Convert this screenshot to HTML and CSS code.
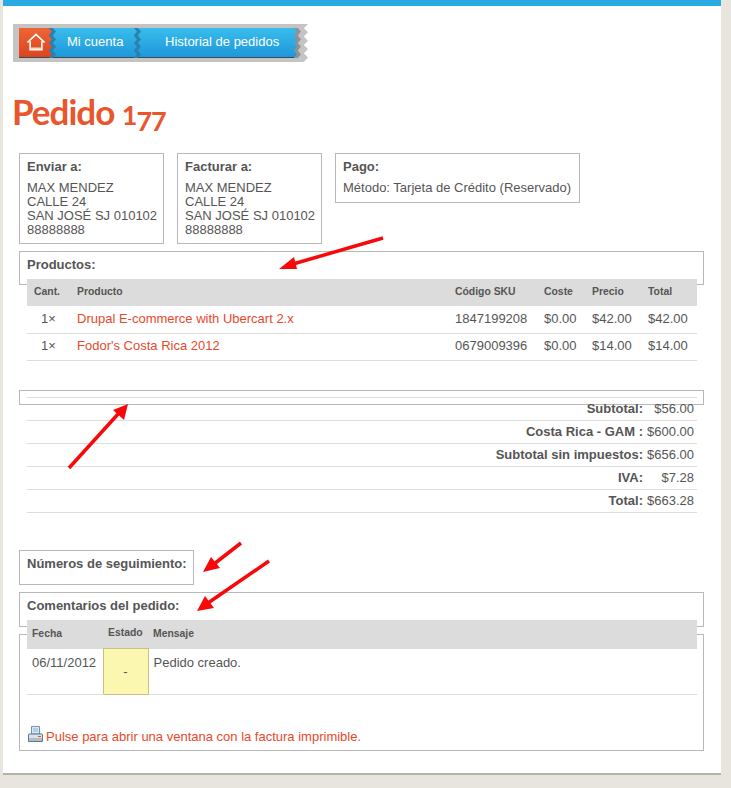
FILE: index.html
```html
<!DOCTYPE html>
<html lang="es">
<head>
  <meta charset="UTF-8">
  <title>Pedido 177</title>
  <link rel="stylesheet" href="styles.css">
</head>
<body>
  <div class="page">
    <div class="crumbs">
      <a class="crumb home" href="#">
        <svg width="20" height="19" viewBox="0 0 22 21">
          <path d="M1.5 10.5 L11 1.5 L20.5 10.5 M4.5 9 V18.5 H17.5 V9" fill="none" stroke="#fff" stroke-width="1.8"/>
          <rect x="5.5" y="16" width="11" height="2" fill="#f6d9b8"/>
        </svg>
      </a>
      <a class="crumb first" href="#"><span class="zig"></span>Mi cuenta</a>
      <a class="crumb second" href="#"><span class="zig"></span>Historial de pedidos<span class="zig tail"></span></a>
    </div>

    <h1>Pedido <span class="num">1</span><span class="num low">77</span></h1>

    <div class="info">
      <div class="box address">
        <h3>Enviar a:</h3>
        <p>MAX MENDEZ<br>CALLE 24<br>SAN JOSÉ SJ 010102<br>88888888</p>
      </div>
      <div class="box address">
        <h3>Facturar a:</h3>
        <p>MAX MENDEZ<br>CALLE 24<br>SAN JOSÉ SJ 010102<br>88888888</p>
      </div>
      <div class="box payment">
        <h3>Pago:</h3>
        <p>Método: Tarjeta de Crédito (Reservado)</p>
      </div>
    </div>

    <div class="box wide products-box"><h3>Productos:</h3></div>
    <table class="data products">
      <thead>
        <tr>
          <th class="c-qty">Cant.</th>
          <th class="c-name">Producto</th>
          <th class="c-sku">Código SKU</th>
          <th class="c-cost">Coste</th>
          <th class="c-price">Precio</th>
          <th class="c-total">Total</th>
        </tr>
      </thead>
      <tbody>
        <tr>
          <td class="qty">1×</td>
          <td><a href="#">Drupal E-commerce with Ubercart 2.x</a></td>
          <td>1847199208</td>
          <td>$0.00</td>
          <td>$42.00</td>
          <td>$42.00</td>
        </tr>
        <tr>
          <td class="qty">1×</td>
          <td><a href="#">Fodor's Costa Rica 2012</a></td>
          <td>0679009396</td>
          <td>$0.00</td>
          <td>$14.00</td>
          <td>$14.00</td>
        </tr>
      </tbody>
    </table>

    <div class="box wide empty-box"></div>
    <table class="totals">
      <tr><th>Subtotal:</th><td>$56.00</td></tr>
      <tr><th>Costa Rica - GAM :</th><td>$600.00</td></tr>
      <tr><th>Subtotal sin impuestos:</th><td>$656.00</td></tr>
      <tr><th>IVA:</th><td>$7.28</td></tr>
      <tr><th>Total:</th><td>$663.28</td></tr>
    </table>

    <div class="box tracking"><h3>Números de seguimiento:</h3></div>
    <div class="box wide comments-box"><h3>Comentarios del pedido:</h3></div>

    <div class="box wide history">
      <table class="data log">
        <thead>
          <tr>
            <th class="c-date">Fecha</th>
            <th class="c-state">Estado</th>
            <th>Mensaje</th>
          </tr>
        </thead>
        <tbody>
          <tr>
            <td>06/11/2012</td>
            <td class="state">-</td>
            <td>Pedido creado.</td>
          </tr>
        </tbody>
      </table>
      <a class="print" href="#">
        <svg width="15" height="17" viewBox="0 0 15 17">
          <path d="M3.5 .5 H11.5 V8 H3.5 Z" fill="#d6eaf7" stroke="#6f93b0"/>
          <path d="M5 3 H10 M5 5 H10" stroke="#8fb2cc"/>
          <path d="M1 8 H14 Q14.5 8 14.5 9 V15.5 H.5 V9 Q.5 8 1 8 Z" fill="#dde1e5" stroke="#5a7a96"/>
          <rect x="1" y="12" width="13" height="3" fill="#b4bcc4"/>
          <rect x="10" y="10" width="3" height="1" fill="#d9503a"/>
        </svg>
        <span>Pulse para abrir una ventana con la factura imprimible.</span>
      </a>
    </div>

    <!-- red marks drawn on top of the screenshot -->
    <svg class="arrows" width="718" height="767" viewBox="3 0 718 767">
      <g fill="none" stroke="#f80808" stroke-width="3.5">
        <path d="M383 238 L293 264"/>
        <path d="M69 468 L119 413"/>
        <path d="M241 543 L214 564"/>
        <path d="M269 561 L208 603"/>
      </g>
      <g fill="#f80808">
        <path d="M279 269 L294 257 L297 269 Z"/>
        <path d="M128 404 L124 420 L113 410 Z"/>
        <path d="M203 572 L211 557 L220 568 Z"/>
        <path d="M197 611 L205 596 L214 608 Z"/>
      </g>
    </svg>
  </div>
</body>
</html>
```
FILE: styles.css
```css
body {
  margin: 0;
  background: #e8e4de;
  font-family: "Liberation Sans", Arial, sans-serif;
  font-size: 13px;
  color: #555;
}

a {
  color: #e8492a;
  text-decoration: none;
}

.page {
  position: relative;
  box-sizing: border-box;
  width: 718px;
  height: 775px;
  margin-left: 3px;
  padding: 18px 0 0 16px;
  background: #fff;
  border-top: 6px solid #29abe2;
  border-bottom: 2px solid #b5b2aa;
}

/* breadcrumb */
.crumbs {
  display: flex;
  box-sizing: border-box;
  width: 295px;
  height: 38px;
  margin-left: -6px;
  padding: 4px 0 4px 6px;
  background: #c4c4c4;
  clip-path: polygon(0 0, 100% 0, 98.6% 11%, 100% 22%, 98.6% 33%, 100% 44%, 98.6% 55%, 100% 66%, 98.6% 77%, 100% 88%, 98.6% 100%, 0 100%);
}

.crumb {
  position: relative;
  display: flex;
  align-items: center;
  box-sizing: border-box;
  height: 30px;
  padding-bottom: 2px;
  color: #fff;
  background: linear-gradient(#39bdec, #1e97db);
  border-bottom: 1px solid #3b4a55;
}

.home {
  justify-content: center;
  width: 33px;
  padding-bottom: 0;
  background: linear-gradient(#ee6534, #dc4420);
}

.first {
  width: 85px;
  padding-left: 15px;
}

.second {
  width: 160px;
  padding-left: 28px;
}

.zig {
  position: absolute;
  top: 0;
  bottom: -1px;
  left: -4px;
  width: 8px;
  background: #2b80ae;
  clip-path: polygon(60% 0, 100% 12%, 60% 25%, 100% 38%, 60% 50%, 100% 62%, 60% 75%, 100% 88%, 60% 100%, 10% 100%, 50% 88%, 10% 75%, 50% 62%, 10% 50%, 50% 38%, 10% 25%, 50% 12%, 10% 0);
}

.tail {
  left: auto;
  right: -4px;
  background: #8e9196;
}

h1 {
  margin: 27px 0 10px -7px;
  font-family: Lato, sans-serif;
  font-size: 35px;
  line-height: 44px;
  font-weight: 700;
  letter-spacing: -1px;
  color: #e9552c;
}

/* the heading font has old-style figures: small digits, the 7s hang below the line */
.num {
  font-size: 27px;
}

.low {
  vertical-align: -6px;
}

/* bordered blocks */
.box {
  box-sizing: border-box;
  padding: 5px 0 6px 7px;
  border: 1px solid #b8b8b8;
}

.box h3 {
  margin: 0;
  font-size: 13px;
  line-height: 15px;
  font-weight: 700;
}

.box p {
  margin: 7px 0 0;
  line-height: 14px;
}

.info {
  display: flex;
  align-items: flex-start;
  gap: 13px;
}

.address {
  width: 145px;
  height: 91px;
}

.payment {
  width: 245px;
  height: 50px;
}

.wide {
  width: 685px;
}

.products-box {
  height: 34px;
  margin-top: 7px;
}

.empty-box {
  height: 15px;
  margin-top: 29px;
}

.tracking {
  width: 175px;
  height: 35px;
  margin-top: 37px;
}

.comments-box {
  height: 35px;
  margin-top: 7px;
}

.history {
  height: 117px;
  margin-top: 7px;
  padding: 0;
}

/* tables */
table {
  border-collapse: collapse;
  table-layout: fixed;
  width: 670px;
  margin-left: 8px;
}

th,
td {
  box-sizing: border-box;
}

.data th {
  font-size: 10.4px;
  font-weight: 700;
  text-align: left;
  background: #dcdcdc;
  padding: 0 7px 2px;
}

.data td {
  padding: 0 7px 2px;
  border-bottom: 1px solid #ddd;
}

.products {
  margin-top: -6px;
}

.products th {
  height: 27px;
}

.products td {
  height: 27px;
}

.c-qty { width: 43px; }
.c-name { width: 378px; }
.c-sku { width: 89px; }
.c-cost { width: 48px; }
.c-price { width: 56px; }
.c-total { width: 56px; }

.qty {
  text-align: center;
}

.totals {
  margin-top: -8px;
  border-top: 1px solid #ddd;
}

.totals th,
.totals td {
  height: 23px;
  padding: 0 1px 0 0;
  text-align: right;
  border-bottom: 1px solid #ddd;
}

.totals td {
  width: 53px;
  padding-right: 3px;
}

.log {
  margin: -15px 0 0 7px;
}

.log th {
  height: 29px;
  padding: 0 5px 2px;
}

.log td {
  height: 46px;
  padding: 6px 5px 0;
  vertical-align: top;
}

.c-date { width: 76px; }
.c-state { width: 45px; text-align: center; }

.log .state {
  padding: 0;
  text-align: center;
  vertical-align: middle;
  background: #fbf7b0;
  border: 1px solid #c8c088;
}

.print {
  display: flex;
  align-items: flex-end;
  gap: 3px;
  margin: 31px 0 0 8px;
}

.print svg {
  margin-bottom: 1px;
}

.arrows {
  position: absolute;
  top: -6px;
  left: 0;
  pointer-events: none;
}
```
